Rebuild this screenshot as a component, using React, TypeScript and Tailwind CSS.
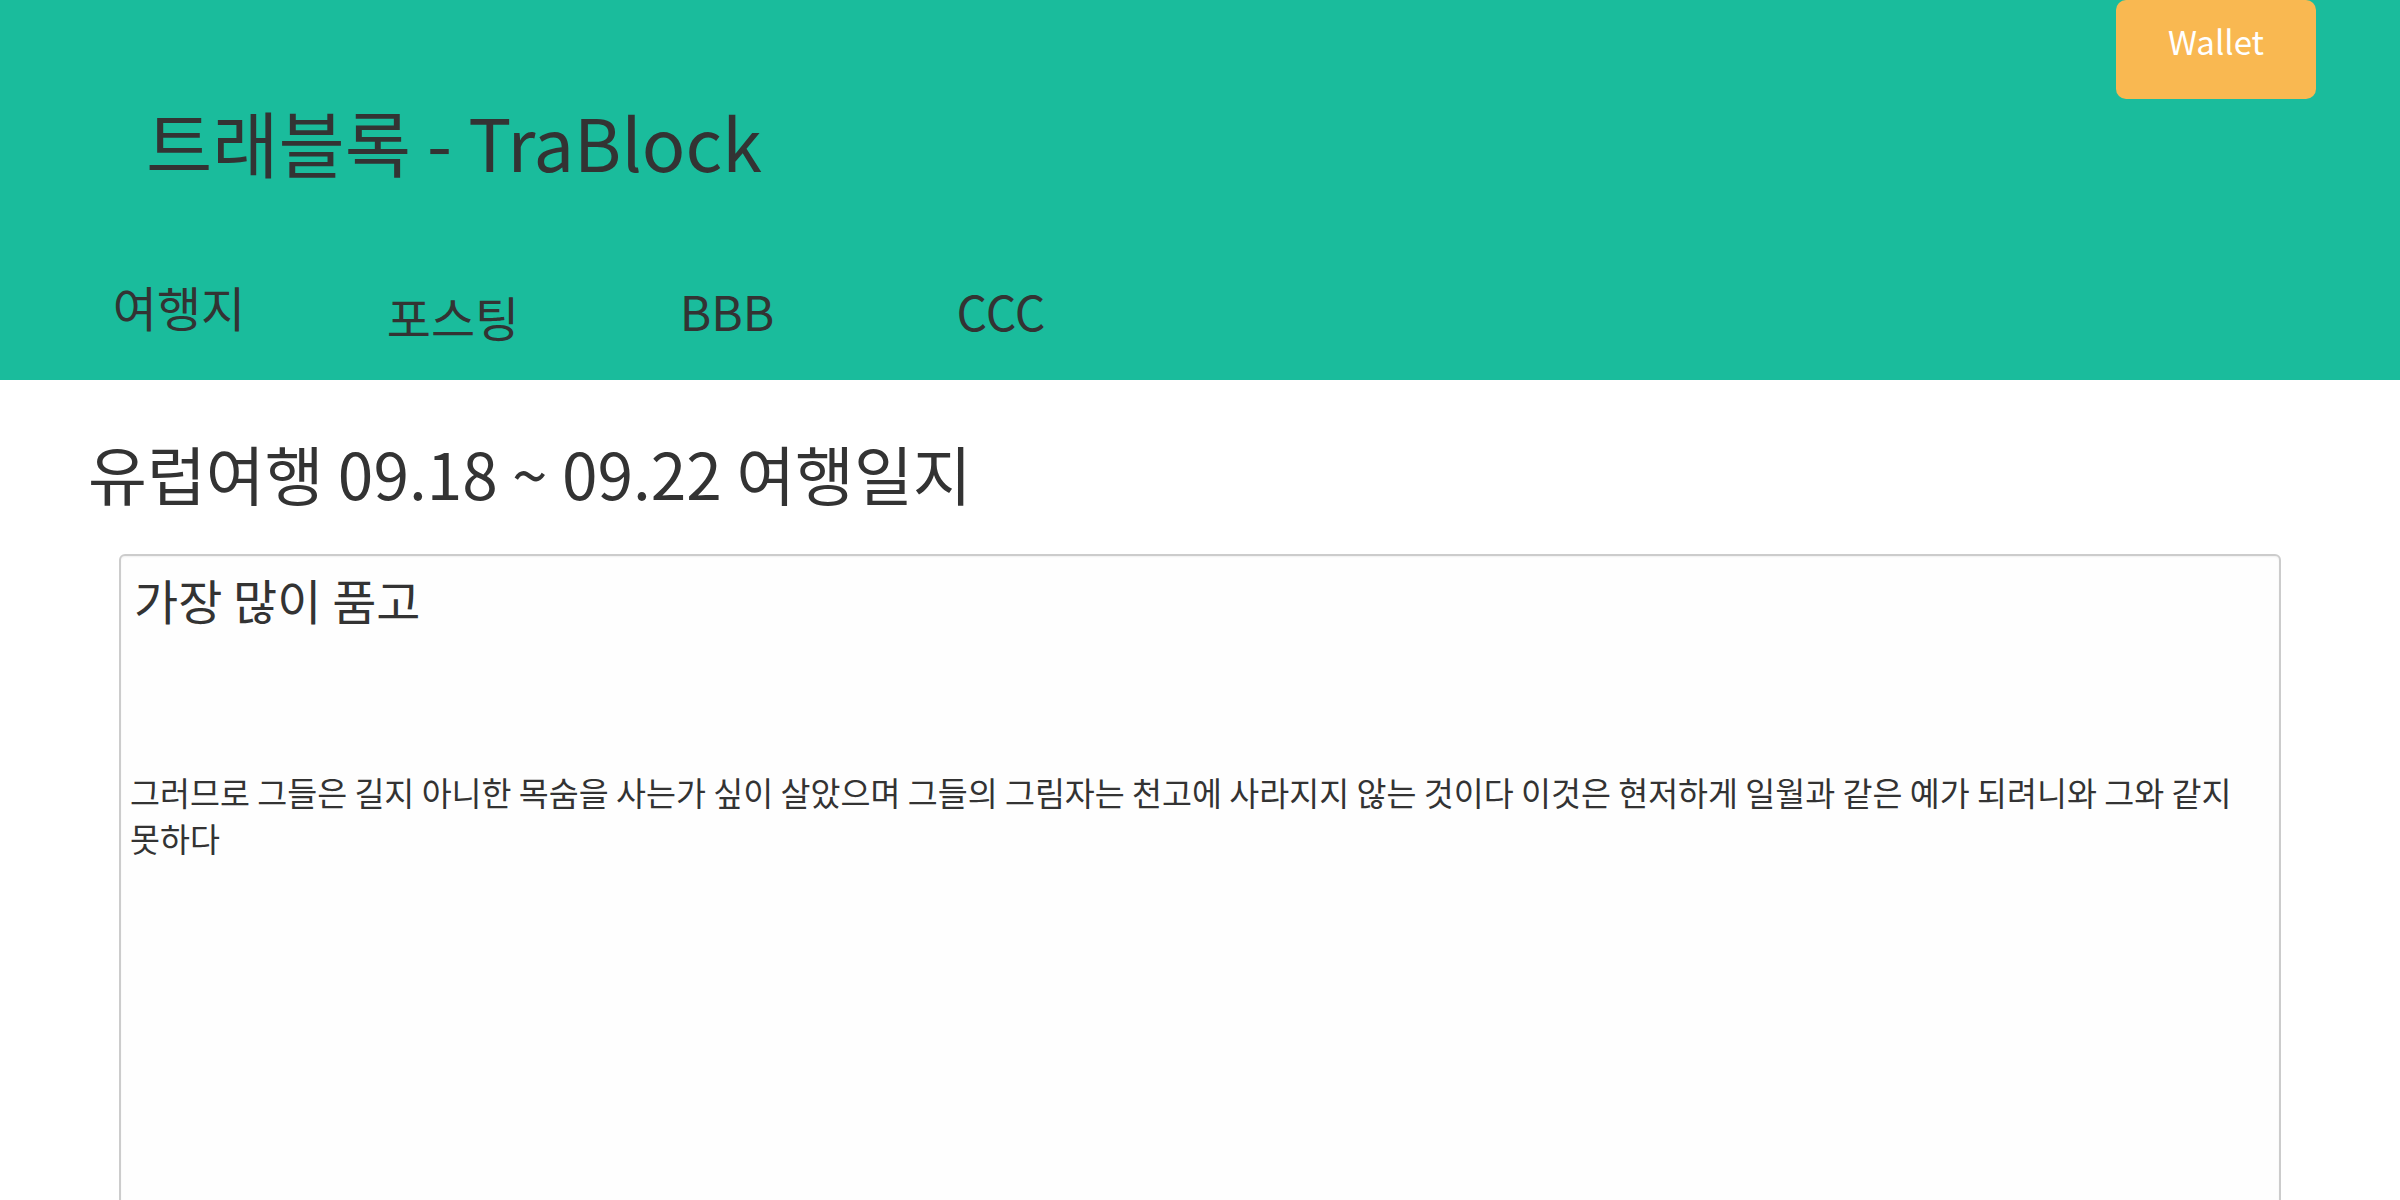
const FONT = "font-['Noto_Sans_CJK_KR','Noto_Sans',sans-serif]";

const navItems = [
  { label: '여행지', offset: '' },
  { label: '포스팅', offset: 'pt-[10px]' },
  { label: 'BBB', offset: 'pt-[4px]' },
  { label: 'CCC', offset: 'pt-[4px]' },
];

function Header() {
  return (
    <header className="relative h-[380px] bg-[#1abc9c] text-[#333333]">
      <button className="absolute right-[84px] top-0 flex h-[99px] w-[200px] items-center justify-center rounded-[10px] bg-[#f9b851] pb-[16px] text-[33px] text-white">
        Wallet
      </button>

      <h1 className="pl-[146px] pt-[91px] text-[72px] leading-[100px]">트래블록 - TraBlock</h1>

      <nav className="flex pl-[42px] pt-[85px]">
        {navItems.map((item) => (
          <a key={item.label} className={`w-[274px] text-center text-[48px] leading-[60px] ${item.offset}`}>
            {item.label}
          </a>
        ))}
      </nav>
    </header>
  );
}

function Post() {
  return (
    <main className="px-[88px] pt-[48px]">
      <h2 className="text-[64px] leading-[88px] text-[#333333]">유럽여행 09.18 ~ 09.22 여행일지</h2>

      <div className="mt-[38px] ml-[31px] mr-[31px] min-h-[700px] rounded-[6px] border-2 border-[#cccccc] bg-[#fefefe] text-[#333333] shadow-[inset_0_1px_2px_rgba(0,0,0,0.06)]">
        <h3 className="pl-[13px] pt-[11px] text-[48px] leading-[64px]">가장 많이 품고</h3>
        <p className="mt-[138px] break-keep pl-[9px] pr-[20px] text-[32.6px] leading-[46px]">
          그러므로 그들은 길지 아니한 목숨을 사는가 싶이 살았으며 그들의 그림자는 천고에 사라지지 않는 것이다 이것은 현저하게 일월과 같은 예가 되려니와 그와 같지 못하다
        </p>
      </div>
    </main>
  );
}

export default function App() {
  return (
    <div className={`min-h-[1200px] bg-white ${FONT}`}>
      <Header />
      <Post />
    </div>
  );
}
